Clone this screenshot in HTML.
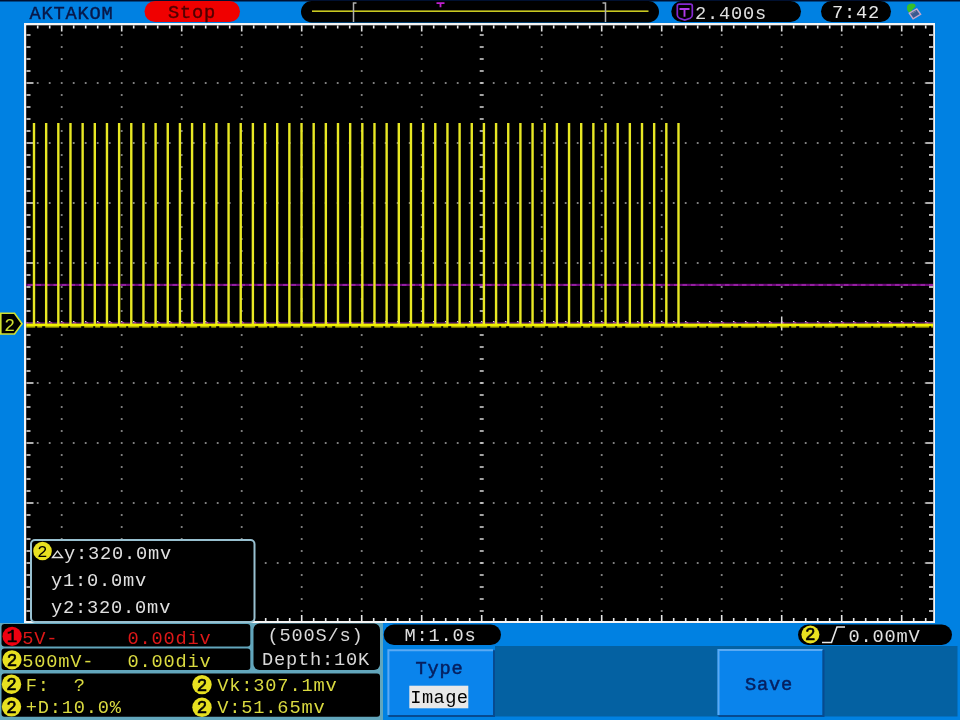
<!DOCTYPE html><html><head><meta charset="utf-8"><style>html,body{margin:0;padding:0;background:#0081e2;width:960px;height:720px;overflow:hidden}svg{display:block;will-change:transform}text{font-family:"Liberation Mono",monospace;font-size:18.7px;letter-spacing:0.8px;white-space:pre}</style></head><body>
<svg width="960" height="720" viewBox="0 0 960 720" xml:space="preserve">
<rect x="0" y="0" width="960" height="720" fill="#0081e2"/>
<rect x="0" y="0" width="960" height="1.5" fill="#001030"/>
<text x="29.5" y="19.3" fill="#081848" style="stroke:#081848;stroke-width:0.4">AKTAKOM</text>
<rect x="144.5" y="1" width="95.5" height="21" rx="10.5" fill="#f00000"/>
<text x="168" y="17.5" fill="#500000" style="stroke:#500000;stroke-width:0.4">Stop</text>
<rect x="301" y="1" width="358" height="21.5" rx="10.75" fill="#000"/>
<rect x="312" y="10.4" width="336.5" height="1.6" fill="#c8c820"/>
<path d="M356.5 3 h-3 v19 M602.5 3 h3 v19" stroke="#b0b0b0" stroke-width="1.5" fill="none"/>
<path d="M436.5 3.2 h8 M440.5 3.2 v4" stroke="#c020d0" stroke-width="1.8" fill="none"/>
<rect x="671.3" y="1" width="129.7" height="21" rx="10.5" fill="#000"/>
<path d="M677.3 6 q0-1.8 1.8-1.8 h11.4 q1.8 0 1.8 1.8 v9 q0 2.2 -2.2 3.2 l-5.3 1.8 l-5.3 -1.8 q-2.2-1 -2.2-3.2 z" stroke="#8428d0" stroke-width="1.7" fill="none"/>
<path d="M679.5 9 h10 M684.5 9 v7.8" stroke="#b038e8" stroke-width="1.9" fill="none"/>
<text x="695" y="18.7" fill="#e0e0e0">2.400s</text>
<rect x="821" y="1" width="70" height="21" rx="10.5" fill="#000"/>
<text x="832" y="18" fill="#e8e8e8">7:42</text>
<path d="M907 6.5 q1-3 5-3 q4 0 3.5 3 l-3 3 l-2 3.5 l-2 -1 q-2-2-1.5-5.5z" fill="#38c028"/>
<path d="M909.3 13.2 l7.5 -4.2 l3.8 5.4 l-7.5 4.4 z" fill="#3a5a90" stroke="#c8a8c8" stroke-width="1.4"/>
<path d="M911.5 13.6 l4.5 -2.5" stroke="#7080a0" stroke-width="1"/>
<rect x="24" y="23" width="911" height="600" fill="#f4f4f4"/>
<rect x="26.2" y="25.3" width="907" height="595.7" fill="#000"/>
<path d="M37.7 25.5v3M37.7 621v-3M49.7 25.5v3M49.7 621v-3M61.7 25.5v6M61.7 621v-6M73.7 25.5v3M73.7 621v-3M85.7 25.5v3M85.7 621v-3M97.7 25.5v3M97.7 621v-3M109.7 25.5v3M109.7 621v-3M121.7 25.5v6M121.7 621v-6M133.7 25.5v3M133.7 621v-3M145.7 25.5v3M145.7 621v-3M157.7 25.5v3M157.7 621v-3M169.7 25.5v3M169.7 621v-3M181.7 25.5v6M181.7 621v-6M193.7 25.5v3M193.7 621v-3M205.7 25.5v3M205.7 621v-3M217.7 25.5v3M217.7 621v-3M229.7 25.5v3M229.7 621v-3M241.7 25.5v6M241.7 621v-6M253.7 25.5v3M253.7 621v-3M265.7 25.5v3M265.7 621v-3M277.7 25.5v3M277.7 621v-3M289.7 25.5v3M289.7 621v-3M301.7 25.5v6M301.7 621v-6M313.7 25.5v3M313.7 621v-3M325.7 25.5v3M325.7 621v-3M337.7 25.5v3M337.7 621v-3M349.7 25.5v3M349.7 621v-3M361.7 25.5v6M361.7 621v-6M373.7 25.5v3M373.7 621v-3M385.7 25.5v3M385.7 621v-3M397.7 25.5v3M397.7 621v-3M409.7 25.5v3M409.7 621v-3M421.7 25.5v6M421.7 621v-6M433.7 25.5v3M433.7 621v-3M445.7 25.5v3M445.7 621v-3M457.7 25.5v3M457.7 621v-3M469.7 25.5v3M469.7 621v-3M481.7 25.5v6M481.7 621v-6M493.7 25.5v3M493.7 621v-3M505.7 25.5v3M505.7 621v-3M517.7 25.5v3M517.7 621v-3M529.7 25.5v3M529.7 621v-3M541.7 25.5v6M541.7 621v-6M553.7 25.5v3M553.7 621v-3M565.7 25.5v3M565.7 621v-3M577.7 25.5v3M577.7 621v-3M589.7 25.5v3M589.7 621v-3M601.7 25.5v6M601.7 621v-6M613.7 25.5v3M613.7 621v-3M625.7 25.5v3M625.7 621v-3M637.7 25.5v3M637.7 621v-3M649.7 25.5v3M649.7 621v-3M661.7 25.5v6M661.7 621v-6M673.7 25.5v3M673.7 621v-3M685.7 25.5v3M685.7 621v-3M697.7 25.5v3M697.7 621v-3M709.7 25.5v3M709.7 621v-3M721.7 25.5v6M721.7 621v-6M733.7 25.5v3M733.7 621v-3M745.7 25.5v3M745.7 621v-3M757.7 25.5v3M757.7 621v-3M769.7 25.5v3M769.7 621v-3M781.7 25.5v6M781.7 621v-6M793.7 25.5v3M793.7 621v-3M805.7 25.5v3M805.7 621v-3M817.7 25.5v3M817.7 621v-3M829.7 25.5v3M829.7 621v-3M841.7 25.5v6M841.7 621v-6M853.7 25.5v3M853.7 621v-3M865.7 25.5v3M865.7 621v-3M877.7 25.5v3M877.7 621v-3M889.7 25.5v3M889.7 621v-3M901.7 25.5v6M901.7 621v-6M913.7 25.5v3M913.7 621v-3M925.7 25.5v3M925.7 621v-3M26.5 35h4M933 35h-4M26.5 47h4M933 47h-4M26.5 59h4M933 59h-4M26.5 71h4M933 71h-4M26.5 83h7M933 83h-7M26.5 95h4M933 95h-4M26.5 107h4M933 107h-4M26.5 119h4M933 119h-4M26.5 131h4M933 131h-4M26.5 143h7M933 143h-7M26.5 155h4M933 155h-4M26.5 167h4M933 167h-4M26.5 179h4M933 179h-4M26.5 191h4M933 191h-4M26.5 203h7M933 203h-7M26.5 215h4M933 215h-4M26.5 227h4M933 227h-4M26.5 239h4M933 239h-4M26.5 251h4M933 251h-4M26.5 263h7M933 263h-7M26.5 275h4M933 275h-4M26.5 287h4M933 287h-4M26.5 299h4M933 299h-4M26.5 311h4M933 311h-4M26.5 323h7M933 323h-7M26.5 335h4M933 335h-4M26.5 347h4M933 347h-4M26.5 359h4M933 359h-4M26.5 371h4M933 371h-4M26.5 383h7M933 383h-7M26.5 395h4M933 395h-4M26.5 407h4M933 407h-4M26.5 419h4M933 419h-4M26.5 431h4M933 431h-4M26.5 443h7M933 443h-7M26.5 455h4M933 455h-4M26.5 467h4M933 467h-4M26.5 479h4M933 479h-4M26.5 491h4M933 491h-4M26.5 503h7M933 503h-7M26.5 515h4M933 515h-4M26.5 527h4M933 527h-4M26.5 539h4M933 539h-4M26.5 551h4M933 551h-4M26.5 563h7M933 563h-7M26.5 575h4M933 575h-4M26.5 587h4M933 587h-4M26.5 599h4M933 599h-4M26.5 611h4M933 611h-4" stroke="#e8e8e8" stroke-width="1.6" fill="none"/>
<path d="M60.8 35.0h1.8M60.8 47.0h1.8M60.8 59.0h1.8M60.8 71.0h1.8M60.8 83.0h1.8M60.8 95.0h1.8M60.8 107.0h1.8M60.8 119.0h1.8M60.8 131.0h1.8M60.8 143.0h1.8M60.8 155.0h1.8M60.8 167.0h1.8M60.8 179.0h1.8M60.8 191.0h1.8M60.8 203.0h1.8M60.8 215.0h1.8M60.8 227.0h1.8M60.8 239.0h1.8M60.8 251.0h1.8M60.8 263.0h1.8M60.8 275.0h1.8M60.8 287.0h1.8M60.8 299.0h1.8M60.8 311.0h1.8M60.8 323.0h1.8M60.8 335.0h1.8M60.8 347.0h1.8M60.8 359.0h1.8M60.8 371.0h1.8M60.8 383.0h1.8M60.8 395.0h1.8M60.8 407.0h1.8M60.8 419.0h1.8M60.8 431.0h1.8M60.8 443.0h1.8M60.8 455.0h1.8M60.8 467.0h1.8M60.8 479.0h1.8M60.8 491.0h1.8M60.8 503.0h1.8M60.8 515.0h1.8M60.8 527.0h1.8M60.8 539.0h1.8M60.8 551.0h1.8M60.8 563.0h1.8M60.8 575.0h1.8M60.8 587.0h1.8M60.8 599.0h1.8M60.8 611.0h1.8M120.8 35.0h1.8M120.8 47.0h1.8M120.8 59.0h1.8M120.8 71.0h1.8M120.8 83.0h1.8M120.8 95.0h1.8M120.8 107.0h1.8M120.8 119.0h1.8M120.8 131.0h1.8M120.8 143.0h1.8M120.8 155.0h1.8M120.8 167.0h1.8M120.8 179.0h1.8M120.8 191.0h1.8M120.8 203.0h1.8M120.8 215.0h1.8M120.8 227.0h1.8M120.8 239.0h1.8M120.8 251.0h1.8M120.8 263.0h1.8M120.8 275.0h1.8M120.8 287.0h1.8M120.8 299.0h1.8M120.8 311.0h1.8M120.8 323.0h1.8M120.8 335.0h1.8M120.8 347.0h1.8M120.8 359.0h1.8M120.8 371.0h1.8M120.8 383.0h1.8M120.8 395.0h1.8M120.8 407.0h1.8M120.8 419.0h1.8M120.8 431.0h1.8M120.8 443.0h1.8M120.8 455.0h1.8M120.8 467.0h1.8M120.8 479.0h1.8M120.8 491.0h1.8M120.8 503.0h1.8M120.8 515.0h1.8M120.8 527.0h1.8M120.8 539.0h1.8M120.8 551.0h1.8M120.8 563.0h1.8M120.8 575.0h1.8M120.8 587.0h1.8M120.8 599.0h1.8M120.8 611.0h1.8M180.8 35.0h1.8M180.8 47.0h1.8M180.8 59.0h1.8M180.8 71.0h1.8M180.8 83.0h1.8M180.8 95.0h1.8M180.8 107.0h1.8M180.8 119.0h1.8M180.8 131.0h1.8M180.8 143.0h1.8M180.8 155.0h1.8M180.8 167.0h1.8M180.8 179.0h1.8M180.8 191.0h1.8M180.8 203.0h1.8M180.8 215.0h1.8M180.8 227.0h1.8M180.8 239.0h1.8M180.8 251.0h1.8M180.8 263.0h1.8M180.8 275.0h1.8M180.8 287.0h1.8M180.8 299.0h1.8M180.8 311.0h1.8M180.8 323.0h1.8M180.8 335.0h1.8M180.8 347.0h1.8M180.8 359.0h1.8M180.8 371.0h1.8M180.8 383.0h1.8M180.8 395.0h1.8M180.8 407.0h1.8M180.8 419.0h1.8M180.8 431.0h1.8M180.8 443.0h1.8M180.8 455.0h1.8M180.8 467.0h1.8M180.8 479.0h1.8M180.8 491.0h1.8M180.8 503.0h1.8M180.8 515.0h1.8M180.8 527.0h1.8M180.8 539.0h1.8M180.8 551.0h1.8M180.8 563.0h1.8M180.8 575.0h1.8M180.8 587.0h1.8M180.8 599.0h1.8M180.8 611.0h1.8M240.8 35.0h1.8M240.8 47.0h1.8M240.8 59.0h1.8M240.8 71.0h1.8M240.8 83.0h1.8M240.8 95.0h1.8M240.8 107.0h1.8M240.8 119.0h1.8M240.8 131.0h1.8M240.8 143.0h1.8M240.8 155.0h1.8M240.8 167.0h1.8M240.8 179.0h1.8M240.8 191.0h1.8M240.8 203.0h1.8M240.8 215.0h1.8M240.8 227.0h1.8M240.8 239.0h1.8M240.8 251.0h1.8M240.8 263.0h1.8M240.8 275.0h1.8M240.8 287.0h1.8M240.8 299.0h1.8M240.8 311.0h1.8M240.8 323.0h1.8M240.8 335.0h1.8M240.8 347.0h1.8M240.8 359.0h1.8M240.8 371.0h1.8M240.8 383.0h1.8M240.8 395.0h1.8M240.8 407.0h1.8M240.8 419.0h1.8M240.8 431.0h1.8M240.8 443.0h1.8M240.8 455.0h1.8M240.8 467.0h1.8M240.8 479.0h1.8M240.8 491.0h1.8M240.8 503.0h1.8M240.8 515.0h1.8M240.8 527.0h1.8M240.8 539.0h1.8M240.8 551.0h1.8M240.8 563.0h1.8M240.8 575.0h1.8M240.8 587.0h1.8M240.8 599.0h1.8M240.8 611.0h1.8M300.8 35.0h1.8M300.8 47.0h1.8M300.8 59.0h1.8M300.8 71.0h1.8M300.8 83.0h1.8M300.8 95.0h1.8M300.8 107.0h1.8M300.8 119.0h1.8M300.8 131.0h1.8M300.8 143.0h1.8M300.8 155.0h1.8M300.8 167.0h1.8M300.8 179.0h1.8M300.8 191.0h1.8M300.8 203.0h1.8M300.8 215.0h1.8M300.8 227.0h1.8M300.8 239.0h1.8M300.8 251.0h1.8M300.8 263.0h1.8M300.8 275.0h1.8M300.8 287.0h1.8M300.8 299.0h1.8M300.8 311.0h1.8M300.8 323.0h1.8M300.8 335.0h1.8M300.8 347.0h1.8M300.8 359.0h1.8M300.8 371.0h1.8M300.8 383.0h1.8M300.8 395.0h1.8M300.8 407.0h1.8M300.8 419.0h1.8M300.8 431.0h1.8M300.8 443.0h1.8M300.8 455.0h1.8M300.8 467.0h1.8M300.8 479.0h1.8M300.8 491.0h1.8M300.8 503.0h1.8M300.8 515.0h1.8M300.8 527.0h1.8M300.8 539.0h1.8M300.8 551.0h1.8M300.8 563.0h1.8M300.8 575.0h1.8M300.8 587.0h1.8M300.8 599.0h1.8M300.8 611.0h1.8M360.8 35.0h1.8M360.8 47.0h1.8M360.8 59.0h1.8M360.8 71.0h1.8M360.8 83.0h1.8M360.8 95.0h1.8M360.8 107.0h1.8M360.8 119.0h1.8M360.8 131.0h1.8M360.8 143.0h1.8M360.8 155.0h1.8M360.8 167.0h1.8M360.8 179.0h1.8M360.8 191.0h1.8M360.8 203.0h1.8M360.8 215.0h1.8M360.8 227.0h1.8M360.8 239.0h1.8M360.8 251.0h1.8M360.8 263.0h1.8M360.8 275.0h1.8M360.8 287.0h1.8M360.8 299.0h1.8M360.8 311.0h1.8M360.8 323.0h1.8M360.8 335.0h1.8M360.8 347.0h1.8M360.8 359.0h1.8M360.8 371.0h1.8M360.8 383.0h1.8M360.8 395.0h1.8M360.8 407.0h1.8M360.8 419.0h1.8M360.8 431.0h1.8M360.8 443.0h1.8M360.8 455.0h1.8M360.8 467.0h1.8M360.8 479.0h1.8M360.8 491.0h1.8M360.8 503.0h1.8M360.8 515.0h1.8M360.8 527.0h1.8M360.8 539.0h1.8M360.8 551.0h1.8M360.8 563.0h1.8M360.8 575.0h1.8M360.8 587.0h1.8M360.8 599.0h1.8M360.8 611.0h1.8M420.8 35.0h1.8M420.8 47.0h1.8M420.8 59.0h1.8M420.8 71.0h1.8M420.8 83.0h1.8M420.8 95.0h1.8M420.8 107.0h1.8M420.8 119.0h1.8M420.8 131.0h1.8M420.8 143.0h1.8M420.8 155.0h1.8M420.8 167.0h1.8M420.8 179.0h1.8M420.8 191.0h1.8M420.8 203.0h1.8M420.8 215.0h1.8M420.8 227.0h1.8M420.8 239.0h1.8M420.8 251.0h1.8M420.8 263.0h1.8M420.8 275.0h1.8M420.8 287.0h1.8M420.8 299.0h1.8M420.8 311.0h1.8M420.8 323.0h1.8M420.8 335.0h1.8M420.8 347.0h1.8M420.8 359.0h1.8M420.8 371.0h1.8M420.8 383.0h1.8M420.8 395.0h1.8M420.8 407.0h1.8M420.8 419.0h1.8M420.8 431.0h1.8M420.8 443.0h1.8M420.8 455.0h1.8M420.8 467.0h1.8M420.8 479.0h1.8M420.8 491.0h1.8M420.8 503.0h1.8M420.8 515.0h1.8M420.8 527.0h1.8M420.8 539.0h1.8M420.8 551.0h1.8M420.8 563.0h1.8M420.8 575.0h1.8M420.8 587.0h1.8M420.8 599.0h1.8M420.8 611.0h1.8M540.8 35.0h1.8M540.8 47.0h1.8M540.8 59.0h1.8M540.8 71.0h1.8M540.8 83.0h1.8M540.8 95.0h1.8M540.8 107.0h1.8M540.8 119.0h1.8M540.8 131.0h1.8M540.8 143.0h1.8M540.8 155.0h1.8M540.8 167.0h1.8M540.8 179.0h1.8M540.8 191.0h1.8M540.8 203.0h1.8M540.8 215.0h1.8M540.8 227.0h1.8M540.8 239.0h1.8M540.8 251.0h1.8M540.8 263.0h1.8M540.8 275.0h1.8M540.8 287.0h1.8M540.8 299.0h1.8M540.8 311.0h1.8M540.8 323.0h1.8M540.8 335.0h1.8M540.8 347.0h1.8M540.8 359.0h1.8M540.8 371.0h1.8M540.8 383.0h1.8M540.8 395.0h1.8M540.8 407.0h1.8M540.8 419.0h1.8M540.8 431.0h1.8M540.8 443.0h1.8M540.8 455.0h1.8M540.8 467.0h1.8M540.8 479.0h1.8M540.8 491.0h1.8M540.8 503.0h1.8M540.8 515.0h1.8M540.8 527.0h1.8M540.8 539.0h1.8M540.8 551.0h1.8M540.8 563.0h1.8M540.8 575.0h1.8M540.8 587.0h1.8M540.8 599.0h1.8M540.8 611.0h1.8M600.8 35.0h1.8M600.8 47.0h1.8M600.8 59.0h1.8M600.8 71.0h1.8M600.8 83.0h1.8M600.8 95.0h1.8M600.8 107.0h1.8M600.8 119.0h1.8M600.8 131.0h1.8M600.8 143.0h1.8M600.8 155.0h1.8M600.8 167.0h1.8M600.8 179.0h1.8M600.8 191.0h1.8M600.8 203.0h1.8M600.8 215.0h1.8M600.8 227.0h1.8M600.8 239.0h1.8M600.8 251.0h1.8M600.8 263.0h1.8M600.8 275.0h1.8M600.8 287.0h1.8M600.8 299.0h1.8M600.8 311.0h1.8M600.8 323.0h1.8M600.8 335.0h1.8M600.8 347.0h1.8M600.8 359.0h1.8M600.8 371.0h1.8M600.8 383.0h1.8M600.8 395.0h1.8M600.8 407.0h1.8M600.8 419.0h1.8M600.8 431.0h1.8M600.8 443.0h1.8M600.8 455.0h1.8M600.8 467.0h1.8M600.8 479.0h1.8M600.8 491.0h1.8M600.8 503.0h1.8M600.8 515.0h1.8M600.8 527.0h1.8M600.8 539.0h1.8M600.8 551.0h1.8M600.8 563.0h1.8M600.8 575.0h1.8M600.8 587.0h1.8M600.8 599.0h1.8M600.8 611.0h1.8M660.8 35.0h1.8M660.8 47.0h1.8M660.8 59.0h1.8M660.8 71.0h1.8M660.8 83.0h1.8M660.8 95.0h1.8M660.8 107.0h1.8M660.8 119.0h1.8M660.8 131.0h1.8M660.8 143.0h1.8M660.8 155.0h1.8M660.8 167.0h1.8M660.8 179.0h1.8M660.8 191.0h1.8M660.8 203.0h1.8M660.8 215.0h1.8M660.8 227.0h1.8M660.8 239.0h1.8M660.8 251.0h1.8M660.8 263.0h1.8M660.8 275.0h1.8M660.8 287.0h1.8M660.8 299.0h1.8M660.8 311.0h1.8M660.8 323.0h1.8M660.8 335.0h1.8M660.8 347.0h1.8M660.8 359.0h1.8M660.8 371.0h1.8M660.8 383.0h1.8M660.8 395.0h1.8M660.8 407.0h1.8M660.8 419.0h1.8M660.8 431.0h1.8M660.8 443.0h1.8M660.8 455.0h1.8M660.8 467.0h1.8M660.8 479.0h1.8M660.8 491.0h1.8M660.8 503.0h1.8M660.8 515.0h1.8M660.8 527.0h1.8M660.8 539.0h1.8M660.8 551.0h1.8M660.8 563.0h1.8M660.8 575.0h1.8M660.8 587.0h1.8M660.8 599.0h1.8M660.8 611.0h1.8M720.8 35.0h1.8M720.8 47.0h1.8M720.8 59.0h1.8M720.8 71.0h1.8M720.8 83.0h1.8M720.8 95.0h1.8M720.8 107.0h1.8M720.8 119.0h1.8M720.8 131.0h1.8M720.8 143.0h1.8M720.8 155.0h1.8M720.8 167.0h1.8M720.8 179.0h1.8M720.8 191.0h1.8M720.8 203.0h1.8M720.8 215.0h1.8M720.8 227.0h1.8M720.8 239.0h1.8M720.8 251.0h1.8M720.8 263.0h1.8M720.8 275.0h1.8M720.8 287.0h1.8M720.8 299.0h1.8M720.8 311.0h1.8M720.8 323.0h1.8M720.8 335.0h1.8M720.8 347.0h1.8M720.8 359.0h1.8M720.8 371.0h1.8M720.8 383.0h1.8M720.8 395.0h1.8M720.8 407.0h1.8M720.8 419.0h1.8M720.8 431.0h1.8M720.8 443.0h1.8M720.8 455.0h1.8M720.8 467.0h1.8M720.8 479.0h1.8M720.8 491.0h1.8M720.8 503.0h1.8M720.8 515.0h1.8M720.8 527.0h1.8M720.8 539.0h1.8M720.8 551.0h1.8M720.8 563.0h1.8M720.8 575.0h1.8M720.8 587.0h1.8M720.8 599.0h1.8M720.8 611.0h1.8M780.8 35.0h1.8M780.8 47.0h1.8M780.8 59.0h1.8M780.8 71.0h1.8M780.8 83.0h1.8M780.8 95.0h1.8M780.8 107.0h1.8M780.8 119.0h1.8M780.8 131.0h1.8M780.8 143.0h1.8M780.8 155.0h1.8M780.8 167.0h1.8M780.8 179.0h1.8M780.8 191.0h1.8M780.8 203.0h1.8M780.8 215.0h1.8M780.8 227.0h1.8M780.8 239.0h1.8M780.8 251.0h1.8M780.8 263.0h1.8M780.8 275.0h1.8M780.8 287.0h1.8M780.8 299.0h1.8M780.8 311.0h1.8M780.8 323.0h1.8M780.8 335.0h1.8M780.8 347.0h1.8M780.8 359.0h1.8M780.8 371.0h1.8M780.8 383.0h1.8M780.8 395.0h1.8M780.8 407.0h1.8M780.8 419.0h1.8M780.8 431.0h1.8M780.8 443.0h1.8M780.8 455.0h1.8M780.8 467.0h1.8M780.8 479.0h1.8M780.8 491.0h1.8M780.8 503.0h1.8M780.8 515.0h1.8M780.8 527.0h1.8M780.8 539.0h1.8M780.8 551.0h1.8M780.8 563.0h1.8M780.8 575.0h1.8M780.8 587.0h1.8M780.8 599.0h1.8M780.8 611.0h1.8M840.8 35.0h1.8M840.8 47.0h1.8M840.8 59.0h1.8M840.8 71.0h1.8M840.8 83.0h1.8M840.8 95.0h1.8M840.8 107.0h1.8M840.8 119.0h1.8M840.8 131.0h1.8M840.8 143.0h1.8M840.8 155.0h1.8M840.8 167.0h1.8M840.8 179.0h1.8M840.8 191.0h1.8M840.8 203.0h1.8M840.8 215.0h1.8M840.8 227.0h1.8M840.8 239.0h1.8M840.8 251.0h1.8M840.8 263.0h1.8M840.8 275.0h1.8M840.8 287.0h1.8M840.8 299.0h1.8M840.8 311.0h1.8M840.8 323.0h1.8M840.8 335.0h1.8M840.8 347.0h1.8M840.8 359.0h1.8M840.8 371.0h1.8M840.8 383.0h1.8M840.8 395.0h1.8M840.8 407.0h1.8M840.8 419.0h1.8M840.8 431.0h1.8M840.8 443.0h1.8M840.8 455.0h1.8M840.8 467.0h1.8M840.8 479.0h1.8M840.8 491.0h1.8M840.8 503.0h1.8M840.8 515.0h1.8M840.8 527.0h1.8M840.8 539.0h1.8M840.8 551.0h1.8M840.8 563.0h1.8M840.8 575.0h1.8M840.8 587.0h1.8M840.8 599.0h1.8M840.8 611.0h1.8M900.8 35.0h1.8M900.8 47.0h1.8M900.8 59.0h1.8M900.8 71.0h1.8M900.8 83.0h1.8M900.8 95.0h1.8M900.8 107.0h1.8M900.8 119.0h1.8M900.8 131.0h1.8M900.8 143.0h1.8M900.8 155.0h1.8M900.8 167.0h1.8M900.8 179.0h1.8M900.8 191.0h1.8M900.8 203.0h1.8M900.8 215.0h1.8M900.8 227.0h1.8M900.8 239.0h1.8M900.8 251.0h1.8M900.8 263.0h1.8M900.8 275.0h1.8M900.8 287.0h1.8M900.8 299.0h1.8M900.8 311.0h1.8M900.8 323.0h1.8M900.8 335.0h1.8M900.8 347.0h1.8M900.8 359.0h1.8M900.8 371.0h1.8M900.8 383.0h1.8M900.8 395.0h1.8M900.8 407.0h1.8M900.8 419.0h1.8M900.8 431.0h1.8M900.8 443.0h1.8M900.8 455.0h1.8M900.8 467.0h1.8M900.8 479.0h1.8M900.8 491.0h1.8M900.8 503.0h1.8M900.8 515.0h1.8M900.8 527.0h1.8M900.8 539.0h1.8M900.8 551.0h1.8M900.8 563.0h1.8M900.8 575.0h1.8M900.8 587.0h1.8M900.8 599.0h1.8M900.8 611.0h1.8M36.8 83.0h1.8M48.8 83.0h1.8M60.8 83.0h1.8M72.8 83.0h1.8M84.8 83.0h1.8M96.8 83.0h1.8M108.8 83.0h1.8M120.8 83.0h1.8M132.8 83.0h1.8M144.8 83.0h1.8M156.8 83.0h1.8M168.8 83.0h1.8M180.8 83.0h1.8M192.8 83.0h1.8M204.8 83.0h1.8M216.8 83.0h1.8M228.8 83.0h1.8M240.8 83.0h1.8M252.8 83.0h1.8M264.8 83.0h1.8M276.8 83.0h1.8M288.8 83.0h1.8M300.8 83.0h1.8M312.8 83.0h1.8M324.8 83.0h1.8M336.8 83.0h1.8M348.8 83.0h1.8M360.8 83.0h1.8M372.8 83.0h1.8M384.8 83.0h1.8M396.8 83.0h1.8M408.8 83.0h1.8M420.8 83.0h1.8M432.8 83.0h1.8M444.8 83.0h1.8M456.8 83.0h1.8M468.8 83.0h1.8M480.8 83.0h1.8M492.8 83.0h1.8M504.8 83.0h1.8M516.8 83.0h1.8M528.8 83.0h1.8M540.8 83.0h1.8M552.8 83.0h1.8M564.8 83.0h1.8M576.8 83.0h1.8M588.8 83.0h1.8M600.8 83.0h1.8M612.8 83.0h1.8M624.8 83.0h1.8M636.8 83.0h1.8M648.8 83.0h1.8M660.8 83.0h1.8M672.8 83.0h1.8M684.8 83.0h1.8M696.8 83.0h1.8M708.8 83.0h1.8M720.8 83.0h1.8M732.8 83.0h1.8M744.8 83.0h1.8M756.8 83.0h1.8M768.8 83.0h1.8M780.8 83.0h1.8M792.8 83.0h1.8M804.8 83.0h1.8M816.8 83.0h1.8M828.8 83.0h1.8M840.8 83.0h1.8M852.8 83.0h1.8M864.8 83.0h1.8M876.8 83.0h1.8M888.8 83.0h1.8M900.8 83.0h1.8M912.8 83.0h1.8M924.8 83.0h1.8M36.8 143.0h1.8M48.8 143.0h1.8M60.8 143.0h1.8M72.8 143.0h1.8M84.8 143.0h1.8M96.8 143.0h1.8M108.8 143.0h1.8M120.8 143.0h1.8M132.8 143.0h1.8M144.8 143.0h1.8M156.8 143.0h1.8M168.8 143.0h1.8M180.8 143.0h1.8M192.8 143.0h1.8M204.8 143.0h1.8M216.8 143.0h1.8M228.8 143.0h1.8M240.8 143.0h1.8M252.8 143.0h1.8M264.8 143.0h1.8M276.8 143.0h1.8M288.8 143.0h1.8M300.8 143.0h1.8M312.8 143.0h1.8M324.8 143.0h1.8M336.8 143.0h1.8M348.8 143.0h1.8M360.8 143.0h1.8M372.8 143.0h1.8M384.8 143.0h1.8M396.8 143.0h1.8M408.8 143.0h1.8M420.8 143.0h1.8M432.8 143.0h1.8M444.8 143.0h1.8M456.8 143.0h1.8M468.8 143.0h1.8M480.8 143.0h1.8M492.8 143.0h1.8M504.8 143.0h1.8M516.8 143.0h1.8M528.8 143.0h1.8M540.8 143.0h1.8M552.8 143.0h1.8M564.8 143.0h1.8M576.8 143.0h1.8M588.8 143.0h1.8M600.8 143.0h1.8M612.8 143.0h1.8M624.8 143.0h1.8M636.8 143.0h1.8M648.8 143.0h1.8M660.8 143.0h1.8M672.8 143.0h1.8M684.8 143.0h1.8M696.8 143.0h1.8M708.8 143.0h1.8M720.8 143.0h1.8M732.8 143.0h1.8M744.8 143.0h1.8M756.8 143.0h1.8M768.8 143.0h1.8M780.8 143.0h1.8M792.8 143.0h1.8M804.8 143.0h1.8M816.8 143.0h1.8M828.8 143.0h1.8M840.8 143.0h1.8M852.8 143.0h1.8M864.8 143.0h1.8M876.8 143.0h1.8M888.8 143.0h1.8M900.8 143.0h1.8M912.8 143.0h1.8M924.8 143.0h1.8M36.8 203.0h1.8M48.8 203.0h1.8M60.8 203.0h1.8M72.8 203.0h1.8M84.8 203.0h1.8M96.8 203.0h1.8M108.8 203.0h1.8M120.8 203.0h1.8M132.8 203.0h1.8M144.8 203.0h1.8M156.8 203.0h1.8M168.8 203.0h1.8M180.8 203.0h1.8M192.8 203.0h1.8M204.8 203.0h1.8M216.8 203.0h1.8M228.8 203.0h1.8M240.8 203.0h1.8M252.8 203.0h1.8M264.8 203.0h1.8M276.8 203.0h1.8M288.8 203.0h1.8M300.8 203.0h1.8M312.8 203.0h1.8M324.8 203.0h1.8M336.8 203.0h1.8M348.8 203.0h1.8M360.8 203.0h1.8M372.8 203.0h1.8M384.8 203.0h1.8M396.8 203.0h1.8M408.8 203.0h1.8M420.8 203.0h1.8M432.8 203.0h1.8M444.8 203.0h1.8M456.8 203.0h1.8M468.8 203.0h1.8M480.8 203.0h1.8M492.8 203.0h1.8M504.8 203.0h1.8M516.8 203.0h1.8M528.8 203.0h1.8M540.8 203.0h1.8M552.8 203.0h1.8M564.8 203.0h1.8M576.8 203.0h1.8M588.8 203.0h1.8M600.8 203.0h1.8M612.8 203.0h1.8M624.8 203.0h1.8M636.8 203.0h1.8M648.8 203.0h1.8M660.8 203.0h1.8M672.8 203.0h1.8M684.8 203.0h1.8M696.8 203.0h1.8M708.8 203.0h1.8M720.8 203.0h1.8M732.8 203.0h1.8M744.8 203.0h1.8M756.8 203.0h1.8M768.8 203.0h1.8M780.8 203.0h1.8M792.8 203.0h1.8M804.8 203.0h1.8M816.8 203.0h1.8M828.8 203.0h1.8M840.8 203.0h1.8M852.8 203.0h1.8M864.8 203.0h1.8M876.8 203.0h1.8M888.8 203.0h1.8M900.8 203.0h1.8M912.8 203.0h1.8M924.8 203.0h1.8M36.8 263.0h1.8M48.8 263.0h1.8M60.8 263.0h1.8M72.8 263.0h1.8M84.8 263.0h1.8M96.8 263.0h1.8M108.8 263.0h1.8M120.8 263.0h1.8M132.8 263.0h1.8M144.8 263.0h1.8M156.8 263.0h1.8M168.8 263.0h1.8M180.8 263.0h1.8M192.8 263.0h1.8M204.8 263.0h1.8M216.8 263.0h1.8M228.8 263.0h1.8M240.8 263.0h1.8M252.8 263.0h1.8M264.8 263.0h1.8M276.8 263.0h1.8M288.8 263.0h1.8M300.8 263.0h1.8M312.8 263.0h1.8M324.8 263.0h1.8M336.8 263.0h1.8M348.8 263.0h1.8M360.8 263.0h1.8M372.8 263.0h1.8M384.8 263.0h1.8M396.8 263.0h1.8M408.8 263.0h1.8M420.8 263.0h1.8M432.8 263.0h1.8M444.8 263.0h1.8M456.8 263.0h1.8M468.8 263.0h1.8M480.8 263.0h1.8M492.8 263.0h1.8M504.8 263.0h1.8M516.8 263.0h1.8M528.8 263.0h1.8M540.8 263.0h1.8M552.8 263.0h1.8M564.8 263.0h1.8M576.8 263.0h1.8M588.8 263.0h1.8M600.8 263.0h1.8M612.8 263.0h1.8M624.8 263.0h1.8M636.8 263.0h1.8M648.8 263.0h1.8M660.8 263.0h1.8M672.8 263.0h1.8M684.8 263.0h1.8M696.8 263.0h1.8M708.8 263.0h1.8M720.8 263.0h1.8M732.8 263.0h1.8M744.8 263.0h1.8M756.8 263.0h1.8M768.8 263.0h1.8M780.8 263.0h1.8M792.8 263.0h1.8M804.8 263.0h1.8M816.8 263.0h1.8M828.8 263.0h1.8M840.8 263.0h1.8M852.8 263.0h1.8M864.8 263.0h1.8M876.8 263.0h1.8M888.8 263.0h1.8M900.8 263.0h1.8M912.8 263.0h1.8M924.8 263.0h1.8M36.8 323.0h1.8M48.8 323.0h1.8M60.8 323.0h1.8M72.8 323.0h1.8M84.8 323.0h1.8M96.8 323.0h1.8M108.8 323.0h1.8M120.8 323.0h1.8M132.8 323.0h1.8M144.8 323.0h1.8M156.8 323.0h1.8M168.8 323.0h1.8M180.8 323.0h1.8M192.8 323.0h1.8M204.8 323.0h1.8M216.8 323.0h1.8M228.8 323.0h1.8M240.8 323.0h1.8M252.8 323.0h1.8M264.8 323.0h1.8M276.8 323.0h1.8M288.8 323.0h1.8M300.8 323.0h1.8M312.8 323.0h1.8M324.8 323.0h1.8M336.8 323.0h1.8M348.8 323.0h1.8M360.8 323.0h1.8M372.8 323.0h1.8M384.8 323.0h1.8M396.8 323.0h1.8M408.8 323.0h1.8M420.8 323.0h1.8M432.8 323.0h1.8M444.8 323.0h1.8M456.8 323.0h1.8M468.8 323.0h1.8M480.8 323.0h1.8M492.8 323.0h1.8M504.8 323.0h1.8M516.8 323.0h1.8M528.8 323.0h1.8M540.8 323.0h1.8M552.8 323.0h1.8M564.8 323.0h1.8M576.8 323.0h1.8M588.8 323.0h1.8M600.8 323.0h1.8M612.8 323.0h1.8M624.8 323.0h1.8M636.8 323.0h1.8M648.8 323.0h1.8M660.8 323.0h1.8M672.8 323.0h1.8M684.8 323.0h1.8M696.8 323.0h1.8M708.8 323.0h1.8M720.8 323.0h1.8M732.8 323.0h1.8M744.8 323.0h1.8M756.8 323.0h1.8M768.8 323.0h1.8M780.8 323.0h1.8M792.8 323.0h1.8M804.8 323.0h1.8M816.8 323.0h1.8M828.8 323.0h1.8M840.8 323.0h1.8M852.8 323.0h1.8M864.8 323.0h1.8M876.8 323.0h1.8M888.8 323.0h1.8M900.8 323.0h1.8M912.8 323.0h1.8M924.8 323.0h1.8M36.8 383.0h1.8M48.8 383.0h1.8M60.8 383.0h1.8M72.8 383.0h1.8M84.8 383.0h1.8M96.8 383.0h1.8M108.8 383.0h1.8M120.8 383.0h1.8M132.8 383.0h1.8M144.8 383.0h1.8M156.8 383.0h1.8M168.8 383.0h1.8M180.8 383.0h1.8M192.8 383.0h1.8M204.8 383.0h1.8M216.8 383.0h1.8M228.8 383.0h1.8M240.8 383.0h1.8M252.8 383.0h1.8M264.8 383.0h1.8M276.8 383.0h1.8M288.8 383.0h1.8M300.8 383.0h1.8M312.8 383.0h1.8M324.8 383.0h1.8M336.8 383.0h1.8M348.8 383.0h1.8M360.8 383.0h1.8M372.8 383.0h1.8M384.8 383.0h1.8M396.8 383.0h1.8M408.8 383.0h1.8M420.8 383.0h1.8M432.8 383.0h1.8M444.8 383.0h1.8M456.8 383.0h1.8M468.8 383.0h1.8M480.8 383.0h1.8M492.8 383.0h1.8M504.8 383.0h1.8M516.8 383.0h1.8M528.8 383.0h1.8M540.8 383.0h1.8M552.8 383.0h1.8M564.8 383.0h1.8M576.8 383.0h1.8M588.8 383.0h1.8M600.8 383.0h1.8M612.8 383.0h1.8M624.8 383.0h1.8M636.8 383.0h1.8M648.8 383.0h1.8M660.8 383.0h1.8M672.8 383.0h1.8M684.8 383.0h1.8M696.8 383.0h1.8M708.8 383.0h1.8M720.8 383.0h1.8M732.8 383.0h1.8M744.8 383.0h1.8M756.8 383.0h1.8M768.8 383.0h1.8M780.8 383.0h1.8M792.8 383.0h1.8M804.8 383.0h1.8M816.8 383.0h1.8M828.8 383.0h1.8M840.8 383.0h1.8M852.8 383.0h1.8M864.8 383.0h1.8M876.8 383.0h1.8M888.8 383.0h1.8M900.8 383.0h1.8M912.8 383.0h1.8M924.8 383.0h1.8M36.8 443.0h1.8M48.8 443.0h1.8M60.8 443.0h1.8M72.8 443.0h1.8M84.8 443.0h1.8M96.8 443.0h1.8M108.8 443.0h1.8M120.8 443.0h1.8M132.8 443.0h1.8M144.8 443.0h1.8M156.8 443.0h1.8M168.8 443.0h1.8M180.8 443.0h1.8M192.8 443.0h1.8M204.8 443.0h1.8M216.8 443.0h1.8M228.8 443.0h1.8M240.8 443.0h1.8M252.8 443.0h1.8M264.8 443.0h1.8M276.8 443.0h1.8M288.8 443.0h1.8M300.8 443.0h1.8M312.8 443.0h1.8M324.8 443.0h1.8M336.8 443.0h1.8M348.8 443.0h1.8M360.8 443.0h1.8M372.8 443.0h1.8M384.8 443.0h1.8M396.8 443.0h1.8M408.8 443.0h1.8M420.8 443.0h1.8M432.8 443.0h1.8M444.8 443.0h1.8M456.8 443.0h1.8M468.8 443.0h1.8M480.8 443.0h1.8M492.8 443.0h1.8M504.8 443.0h1.8M516.8 443.0h1.8M528.8 443.0h1.8M540.8 443.0h1.8M552.8 443.0h1.8M564.8 443.0h1.8M576.8 443.0h1.8M588.8 443.0h1.8M600.8 443.0h1.8M612.8 443.0h1.8M624.8 443.0h1.8M636.8 443.0h1.8M648.8 443.0h1.8M660.8 443.0h1.8M672.8 443.0h1.8M684.8 443.0h1.8M696.8 443.0h1.8M708.8 443.0h1.8M720.8 443.0h1.8M732.8 443.0h1.8M744.8 443.0h1.8M756.8 443.0h1.8M768.8 443.0h1.8M780.8 443.0h1.8M792.8 443.0h1.8M804.8 443.0h1.8M816.8 443.0h1.8M828.8 443.0h1.8M840.8 443.0h1.8M852.8 443.0h1.8M864.8 443.0h1.8M876.8 443.0h1.8M888.8 443.0h1.8M900.8 443.0h1.8M912.8 443.0h1.8M924.8 443.0h1.8M36.8 503.0h1.8M48.8 503.0h1.8M60.8 503.0h1.8M72.8 503.0h1.8M84.8 503.0h1.8M96.8 503.0h1.8M108.8 503.0h1.8M120.8 503.0h1.8M132.8 503.0h1.8M144.8 503.0h1.8M156.8 503.0h1.8M168.8 503.0h1.8M180.8 503.0h1.8M192.8 503.0h1.8M204.8 503.0h1.8M216.8 503.0h1.8M228.8 503.0h1.8M240.8 503.0h1.8M252.8 503.0h1.8M264.8 503.0h1.8M276.8 503.0h1.8M288.8 503.0h1.8M300.8 503.0h1.8M312.8 503.0h1.8M324.8 503.0h1.8M336.8 503.0h1.8M348.8 503.0h1.8M360.8 503.0h1.8M372.8 503.0h1.8M384.8 503.0h1.8M396.8 503.0h1.8M408.8 503.0h1.8M420.8 503.0h1.8M432.8 503.0h1.8M444.8 503.0h1.8M456.8 503.0h1.8M468.8 503.0h1.8M480.8 503.0h1.8M492.8 503.0h1.8M504.8 503.0h1.8M516.8 503.0h1.8M528.8 503.0h1.8M540.8 503.0h1.8M552.8 503.0h1.8M564.8 503.0h1.8M576.8 503.0h1.8M588.8 503.0h1.8M600.8 503.0h1.8M612.8 503.0h1.8M624.8 503.0h1.8M636.8 503.0h1.8M648.8 503.0h1.8M660.8 503.0h1.8M672.8 503.0h1.8M684.8 503.0h1.8M696.8 503.0h1.8M708.8 503.0h1.8M720.8 503.0h1.8M732.8 503.0h1.8M744.8 503.0h1.8M756.8 503.0h1.8M768.8 503.0h1.8M780.8 503.0h1.8M792.8 503.0h1.8M804.8 503.0h1.8M816.8 503.0h1.8M828.8 503.0h1.8M840.8 503.0h1.8M852.8 503.0h1.8M864.8 503.0h1.8M876.8 503.0h1.8M888.8 503.0h1.8M900.8 503.0h1.8M912.8 503.0h1.8M924.8 503.0h1.8M36.8 563.0h1.8M48.8 563.0h1.8M60.8 563.0h1.8M72.8 563.0h1.8M84.8 563.0h1.8M96.8 563.0h1.8M108.8 563.0h1.8M120.8 563.0h1.8M132.8 563.0h1.8M144.8 563.0h1.8M156.8 563.0h1.8M168.8 563.0h1.8M180.8 563.0h1.8M192.8 563.0h1.8M204.8 563.0h1.8M216.8 563.0h1.8M228.8 563.0h1.8M240.8 563.0h1.8M252.8 563.0h1.8M264.8 563.0h1.8M276.8 563.0h1.8M288.8 563.0h1.8M300.8 563.0h1.8M312.8 563.0h1.8M324.8 563.0h1.8M336.8 563.0h1.8M348.8 563.0h1.8M360.8 563.0h1.8M372.8 563.0h1.8M384.8 563.0h1.8M396.8 563.0h1.8M408.8 563.0h1.8M420.8 563.0h1.8M432.8 563.0h1.8M444.8 563.0h1.8M456.8 563.0h1.8M468.8 563.0h1.8M480.8 563.0h1.8M492.8 563.0h1.8M504.8 563.0h1.8M516.8 563.0h1.8M528.8 563.0h1.8M540.8 563.0h1.8M552.8 563.0h1.8M564.8 563.0h1.8M576.8 563.0h1.8M588.8 563.0h1.8M600.8 563.0h1.8M612.8 563.0h1.8M624.8 563.0h1.8M636.8 563.0h1.8M648.8 563.0h1.8M660.8 563.0h1.8M672.8 563.0h1.8M684.8 563.0h1.8M696.8 563.0h1.8M708.8 563.0h1.8M720.8 563.0h1.8M732.8 563.0h1.8M744.8 563.0h1.8M756.8 563.0h1.8M768.8 563.0h1.8M780.8 563.0h1.8M792.8 563.0h1.8M804.8 563.0h1.8M816.8 563.0h1.8M828.8 563.0h1.8M840.8 563.0h1.8M852.8 563.0h1.8M864.8 563.0h1.8M876.8 563.0h1.8M888.8 563.0h1.8M900.8 563.0h1.8M912.8 563.0h1.8M924.8 563.0h1.8" stroke="#a8a8a8" stroke-width="1.6" fill="none"/>
<path d="M479.7 35h4M479.7 47h4M479.7 59h4M479.7 71h4M479.7 83h4M479.7 95h4M479.7 107h4M479.7 119h4M479.7 131h4M479.7 143h4M479.7 155h4M479.7 167h4M479.7 179h4M479.7 191h4M479.7 203h4M479.7 215h4M479.7 227h4M479.7 239h4M479.7 251h4M479.7 263h4M479.7 275h4M479.7 287h4M479.7 299h4M479.7 311h4M479.7 323h4M479.7 335h4M479.7 347h4M479.7 359h4M479.7 371h4M479.7 383h4M479.7 395h4M479.7 407h4M479.7 419h4M479.7 431h4M479.7 443h4M479.7 455h4M479.7 467h4M479.7 479h4M479.7 491h4M479.7 503h4M479.7 515h4M479.7 527h4M479.7 539h4M479.7 551h4M479.7 563h4M479.7 575h4M479.7 587h4M479.7 599h4M479.7 611h4" stroke="#d8d8d8" stroke-width="1.5" fill="none"/>
<path d="M37.7 321v4M49.7 321v4M61.7 321v4M73.7 321v4M85.7 321v4M97.7 321v4M109.7 321v4M121.7 321v4M133.7 321v4M145.7 321v4M157.7 321v4M169.7 321v4M181.7 321v4M193.7 321v4M205.7 321v4M217.7 321v4M229.7 321v4M241.7 321v4M253.7 321v4M265.7 321v4M277.7 321v4M289.7 321v4M301.7 321v4M313.7 321v4M325.7 321v4M337.7 321v4M349.7 321v4M361.7 321v4M373.7 321v4M385.7 321v4M397.7 321v4M409.7 321v4M421.7 321v4M433.7 321v4M445.7 321v4M457.7 321v4M469.7 321v4M481.7 321v4M493.7 321v4M505.7 321v4M517.7 321v4M529.7 321v4M541.7 321v4M553.7 321v4M565.7 321v4M577.7 321v4M589.7 321v4M601.7 321v4M613.7 321v4M625.7 321v4M637.7 321v4M649.7 321v4M661.7 321v4M673.7 321v4M685.7 321v4M697.7 321v4M709.7 321v4M721.7 321v4M733.7 321v4M745.7 321v4M757.7 321v4M769.7 321v4M781.7 321v4M793.7 321v4M805.7 321v4M817.7 321v4M829.7 321v4M841.7 321v4M853.7 321v4M865.7 321v4M877.7 321v4M889.7 321v4M901.7 321v4M913.7 321v4M925.7 321v4" stroke="#d8d8d8" stroke-width="1.5" fill="none"/>
<rect x="26.2" y="283.8" width="906.8" height="2.2" fill="#6c0a78"/>
<path d="M28 284.9H933" stroke="#9420a0" stroke-width="2" stroke-dasharray="4.5 4" fill="none"/>
<rect x="26.2" y="322.2" width="906.8" height="1.6" fill="#50106a"/>
<path d="M26.2 322.8H933" stroke="#c040b0" stroke-width="1.2" stroke-dasharray="2 10" fill="none"/>
<path d="M781.7 316.5V330.5" stroke="#d8d8d8" stroke-width="1.5" fill="none"/>
<rect x="26.2" y="323.6" width="906.8" height="2.6" fill="#f0f000"/>
<path d="M26.2 326.8H933" stroke="#e8e800" stroke-width="1.2" stroke-dasharray="9 2 5 3 14 2 7 2 11 3" fill="none"/>
<rect x="32.80" y="123" width="2.4" height="201" fill="#e8e824"/><rect x="44.96" y="123" width="2.4" height="201" fill="#e8e824"/><rect x="57.12" y="123" width="2.4" height="201" fill="#e8e824"/><rect x="69.28" y="123" width="2.4" height="201" fill="#e8e824"/><rect x="81.44" y="123" width="2.4" height="201" fill="#e8e824"/><rect x="93.60" y="123" width="2.4" height="201" fill="#e8e824"/><rect x="105.76" y="123" width="2.4" height="201" fill="#e8e824"/><rect x="117.92" y="123" width="2.4" height="201" fill="#e8e824"/><rect x="130.08" y="123" width="2.4" height="201" fill="#e8e824"/><rect x="142.24" y="123" width="2.4" height="201" fill="#e8e824"/><rect x="154.40" y="123" width="2.4" height="201" fill="#e8e824"/><rect x="166.56" y="123" width="2.4" height="201" fill="#e8e824"/><rect x="178.72" y="123" width="2.4" height="201" fill="#e8e824"/><rect x="190.88" y="123" width="2.4" height="201" fill="#e8e824"/><rect x="203.04" y="123" width="2.4" height="201" fill="#e8e824"/><rect x="215.20" y="123" width="2.4" height="201" fill="#e8e824"/><rect x="227.36" y="123" width="2.4" height="201" fill="#e8e824"/><rect x="239.52" y="123" width="2.4" height="201" fill="#e8e824"/><rect x="251.68" y="123" width="2.4" height="201" fill="#e8e824"/><rect x="263.84" y="123" width="2.4" height="201" fill="#e8e824"/><rect x="276.00" y="123" width="2.4" height="201" fill="#e8e824"/><rect x="288.16" y="123" width="2.4" height="201" fill="#e8e824"/><rect x="300.32" y="123" width="2.4" height="201" fill="#e8e824"/><rect x="312.48" y="123" width="2.4" height="201" fill="#e8e824"/><rect x="324.64" y="123" width="2.4" height="201" fill="#e8e824"/><rect x="336.80" y="123" width="2.4" height="201" fill="#e8e824"/><rect x="348.96" y="123" width="2.4" height="201" fill="#e8e824"/><rect x="361.12" y="123" width="2.4" height="201" fill="#e8e824"/><rect x="373.28" y="123" width="2.4" height="201" fill="#e8e824"/><rect x="385.44" y="123" width="2.4" height="201" fill="#e8e824"/><rect x="397.60" y="123" width="2.4" height="201" fill="#e8e824"/><rect x="409.76" y="123" width="2.4" height="201" fill="#e8e824"/><rect x="421.92" y="123" width="2.4" height="201" fill="#e8e824"/><rect x="434.08" y="123" width="2.4" height="201" fill="#e8e824"/><rect x="446.24" y="123" width="2.4" height="201" fill="#e8e824"/><rect x="458.40" y="123" width="2.4" height="201" fill="#e8e824"/><rect x="470.56" y="123" width="2.4" height="201" fill="#e8e824"/><rect x="482.72" y="123" width="2.4" height="201" fill="#e8e824"/><rect x="494.88" y="123" width="2.4" height="201" fill="#e8e824"/><rect x="507.04" y="123" width="2.4" height="201" fill="#e8e824"/><rect x="519.20" y="123" width="2.4" height="201" fill="#e8e824"/><rect x="531.36" y="123" width="2.4" height="201" fill="#e8e824"/><rect x="543.52" y="123" width="2.4" height="201" fill="#e8e824"/><rect x="555.68" y="123" width="2.4" height="201" fill="#e8e824"/><rect x="567.84" y="123" width="2.4" height="201" fill="#e8e824"/><rect x="580.00" y="123" width="2.4" height="201" fill="#e8e824"/><rect x="592.16" y="123" width="2.4" height="201" fill="#e8e824"/><rect x="604.32" y="123" width="2.4" height="201" fill="#e8e824"/><rect x="616.48" y="123" width="2.4" height="201" fill="#e8e824"/><rect x="628.64" y="123" width="2.4" height="201" fill="#e8e824"/><rect x="640.80" y="123" width="2.4" height="201" fill="#e8e824"/><rect x="652.96" y="123" width="2.4" height="201" fill="#e8e824"/><rect x="665.12" y="123" width="2.4" height="201" fill="#e8e824"/><rect x="677.28" y="123" width="2.4" height="201" fill="#e8e824"/>
<path d="M0.8 313.3 H14.5 L22 323.8 L14.5 334 H0.8 Z" fill="#000" stroke="#d0e030" stroke-width="1.6"/>
<text x="4.3" y="330.5" fill="#d0e030" style="font-size:18px;letter-spacing:0">2</text>
<rect x="0" y="623" width="383" height="97" fill="#62a6bc"/>
<rect x="31" y="540" width="223.5" height="82" rx="4" fill="#000" stroke="#98c0d0" stroke-width="2"/>
<rect x="24" y="621" width="7" height="2" fill="#f4f4f4"/>
<circle cx="42.5" cy="551" r="9.3" fill="#e8e020"/>
<text x="37.3" y="556.7" fill="#000" style="font-size:17px;letter-spacing:0">2</text>
<path d="M52.5 557.5 l5 -6.5 l5 6.5 z" stroke="#e0e0e0" stroke-width="1.3" fill="none"/>
<text x="64" y="558.7" fill="#e0e0e0">y:320.0mv</text>
<text x="51" y="586.2" fill="#e0e0e0">y1:0.0mv</text>
<text x="51" y="612.5" fill="#e0e0e0">y2:320.0mv</text>
<rect x="1.5" y="624" width="248.8" height="22.5" rx="3" fill="#000"/>
<rect x="1.5" y="648.5" width="248.8" height="21.5" rx="3" fill="#000"/>
<circle cx="12.1" cy="636.3" r="9.6" fill="#f00010"/>
<text x="6.8" y="642.3" fill="#000" style="font-size:17.5px;letter-spacing:0;stroke:#000;stroke-width:0.6">1</text>
<text x="22.3" y="643.7" fill="#dc1818">5V-</text>
<text x="127.5" y="643.7" fill="#dc1818">0.00div</text>
<circle cx="12" cy="659.8" r="9.6" fill="#e8e020"/>
<text x="6.7" y="665.8" fill="#000" style="font-size:17.5px;letter-spacing:0;stroke:#000;stroke-width:0.6">2</text>
<text x="22.3" y="667.3" fill="#dada40">500mV-</text>
<text x="127.5" y="667.3" fill="#dada40">0.00div</text>
<rect x="253.5" y="623.5" width="126.5" height="46.5" rx="6" fill="#000"/>
<text x="267.5" y="641" fill="#d8d8d8">(500S/s)</text>
<text x="262" y="665" fill="#d8d8d8">Depth:10K</text>
<rect x="1.5" y="673.5" width="378.5" height="43.2" rx="3" fill="#000"/>
<circle cx="11.5" cy="684.2" r="9.7" fill="#e8e020"/>
<text x="6.2" y="690.1" fill="#000" style="font-size:17.5px;letter-spacing:0;stroke:#000;stroke-width:0.6">2</text>
<circle cx="11.5" cy="706.8" r="9.7" fill="#e8e020"/>
<text x="6.2" y="712.7" fill="#000" style="font-size:17.5px;letter-spacing:0;stroke:#000;stroke-width:0.6">2</text>
<circle cx="202" cy="684.6" r="9.7" fill="#e8e020"/>
<text x="196.7" y="690.5" fill="#000" style="font-size:17.5px;letter-spacing:0;stroke:#000;stroke-width:0.6">2</text>
<circle cx="202" cy="707.3" r="9.7" fill="#e8e020"/>
<text x="196.7" y="713.2" fill="#000" style="font-size:17.5px;letter-spacing:0;stroke:#000;stroke-width:0.6">2</text>
<text x="25.7" y="690.8" fill="#dada40">F:  ?</text>
<text x="25.7" y="713.2" fill="#dada40">+D:10.0%</text>
<text x="217.3" y="690.8" fill="#dada40">Vk:307.1mv</text>
<text x="217.3" y="713.2" fill="#dada40">V:51.65mv</text>
<rect x="495" y="646" width="462.5" height="70.5" fill="#0461a2"/>
<rect x="383.7" y="624.5" width="117.3" height="20.5" rx="10.25" fill="#000"/>
<text x="404.5" y="641.3" fill="#e0e0e0">M:1.0s</text>
<rect x="798" y="624.4" width="154" height="20.5" rx="10.25" fill="#000"/>
<circle cx="810.4" cy="634.5" r="9" fill="#e8e020"/>
<text x="805.1" y="640.4" fill="#000" style="font-size:17.5px;letter-spacing:0;stroke:#000;stroke-width:0.6">2</text>
<path d="M822 642.5 h9.5 l5.5 -15.5 h8" stroke="#e8e8e8" stroke-width="1.6" fill="none"/>
<text x="848.4" y="642.1" fill="#e0e0e0">0.00mV</text>
<rect x="387.4" y="649.3" width="105.6" height="65.7" fill="#0a84ec"/>
<path d="M388.4 715 V650.3 H493" stroke="#5aaaf4" stroke-width="2" fill="none"/>
<path d="M494 650.3 V716 H388.4" stroke="#064a90" stroke-width="2" fill="none"/>
<rect x="717.5" y="649" width="105" height="66" fill="#0a84ec"/>
<path d="M718.5 715 V650 H822.5" stroke="#5aaaf4" stroke-width="2" fill="none"/>
<path d="M823.5 650 V716 H718.5" stroke="#064a90" stroke-width="2" fill="none"/>
<text x="415.5" y="674" fill="#062060" style="stroke:#062060;stroke-width:0.5">Type</text>
<rect x="409.3" y="685.7" width="59" height="22.6" fill="#e8e8e8"/>
<text x="410.3" y="703.2" fill="#000" style="letter-spacing:0.4px">Image</text>
<text x="745" y="689.5" fill="#062060" style="stroke:#062060;stroke-width:0.5">Save</text>
</svg></body></html>
